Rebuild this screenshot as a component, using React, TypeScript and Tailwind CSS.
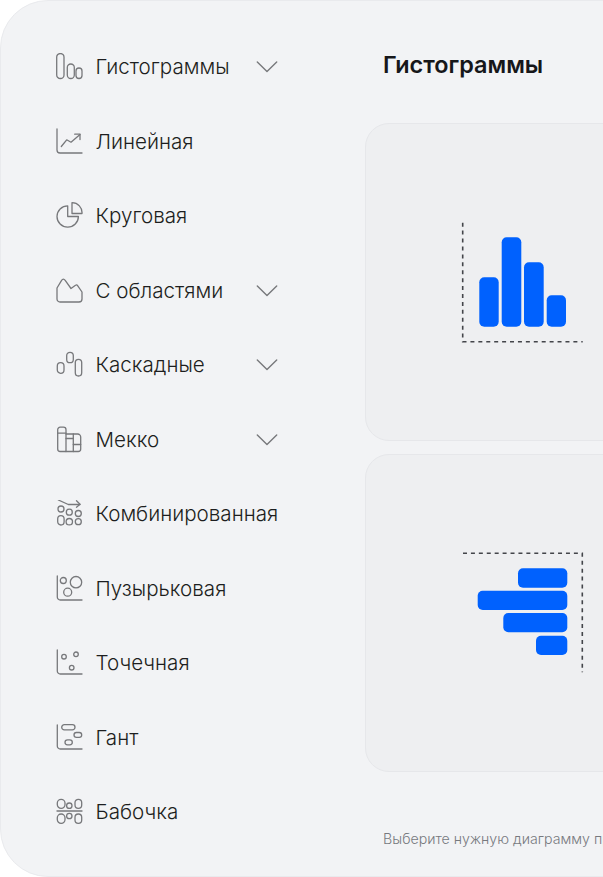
const font = "[font-family:Inter,'Noto_Sans',sans-serif]";

const stroke = {
  fill: "none",
  stroke: "#77787b",
  strokeWidth: 1.3,
  strokeLinecap: "round" as const,
  strokeLinejoin: "round" as const,
};

function Icon({ children }: { children: React.ReactNode }) {
  return (
    <svg width="28" height="28" viewBox="0 0 28 28" className="shrink-0" {...stroke}>
      {children}
    </svg>
  );
}

const Axis = () => <path d="M2.3 1V22a3 3 0 0 0 3 3H27" />;

const items = [
  {
    label: "Гистограммы",
    open: true,
    icon: (
      <>
        <rect x="1.7" y="0.5" width="7.3" height="25" rx="3.6" />
        <rect x="12.3" y="11" width="7" height="14.5" rx="3.5" />
        <rect x="21" y="15" width="6" height="10.5" rx="3" />
      </>
    ),
  },
  {
    label: "Линейная",
    icon: (
      <>
        <path d="M2 1V22a3 3 0 0 0 3 3H27" />
        <path d="M6.3 18.5L11.7 11.8L16 14.2L25 6.5" />
        <path d="M19.7 6.2H25V11.5" />
      </>
    ),
  },
  {
    label: "Круговая",
    icon: (
      <>
        <path d="M12.7 3.8A10.7 10.7 0 1 0 23.4 14.5H12.7Z" />
        <path d="M17 0.7A10 10 0 0 1 27 11.5H17Z" />
      </>
    ),
  },
  {
    label: "С областями",
    open: true,
    icon: <path d="M2 11L6.6 3.4Q8.3 0.8 10.2 3.4L16 11.5L20.5 8.3Q21.7 7.4 22.6 8.6L27 15V22a3 3 0 0 1-3 3H5a3 3 0 0 1-3-3Z" />,
  },
  {
    label: "Каскадные",
    open: true,
    icon: (
      <>
        <rect x="2.3" y="11.7" width="6.7" height="10.6" rx="3.3" />
        <rect x="11.7" y="1.3" width="6.6" height="10.4" rx="3.3" />
        <rect x="20.3" y="8.3" width="6.4" height="16.7" rx="3.2" />
      </>
    ),
  },
  {
    label: "Мекко",
    open: true,
    icon: (
      <>
        <path d="M2.7 3.7a2.5 2.5 0 0 1 2.5-2.5h3.3a2.5 2.5 0 0 1 2.5 2.5V25.5H5.2a2.5 2.5 0 0 1-2.5-2.5Z" />
        <path d="M2.7 7.2H11" />
        <path d="M11 8H22.7a3 3 0 0 1 3 3V23a2.5 2.5 0 0 1-2.5 2.5H11" />
        <path d="M18.3 8V25.5" />
        <path d="M11 12.5H18.3" />
        <path d="M18.3 18.5H25.7" />
      </>
    ),
  },
  {
    label: "Комбинированная",
    icon: (
      <>
        <path d="M3.3 0L13.3 4.5H25" />
        <path d="M21.5 0.8L25 4.3L21.5 7.2" />
        <circle cx="6" cy="9" r="3" />
        <rect x="2.7" y="15.7" width="6.4" height="9.3" rx="3.2" />
        <circle cx="14.3" cy="12.2" r="3" />
        <circle cx="14.3" cy="21.7" r="3.2" />
        <circle cx="23.3" cy="13.5" r="3" />
        <circle cx="23.3" cy="21.7" r="3" />
      </>
    ),
  },
  {
    label: "Пузырьковая",
    icon: (
      <>
        <Axis />
        <circle cx="8.3" cy="5.5" r="3" />
        <circle cx="21" cy="7.2" r="5.7" />
        <circle cx="12.7" cy="17.2" r="4" />
      </>
    ),
  },
  {
    label: "Точечная",
    icon: (
      <>
        <Axis />
        <circle cx="9" cy="7.7" r="2.3" />
        <circle cx="21" cy="5.3" r="2.3" />
        <circle cx="16.7" cy="18.7" r="2.3" />
      </>
    ),
  },
  {
    label: "Гант",
    icon: (
      <>
        <Axis />
        <rect x="6.7" y="0.7" width="13.3" height="5.2" rx="2.6" />
        <rect x="19" y="8.5" width="7.7" height="4.8" rx="2.4" />
        <rect x="10" y="15.8" width="7.3" height="5" rx="2.5" />
      </>
    ),
  },
  {
    label: "Бабочка",
    icon: (
      <>
        <path d="M2 13H27" />
        <rect x="2.3" y="1.3" width="7.7" height="9" rx="3.8" />
        <circle cx="14.3" cy="7.7" r="2.7" />
        <rect x="20" y="1.3" width="6.7" height="9" rx="3.3" />
        <rect x="2.3" y="16" width="7.7" height="9.3" rx="3.8" />
        <circle cx="14.3" cy="18" r="2.7" />
        <rect x="20" y="16" width="6.7" height="9.3" rx="3.3" />
      </>
    ),
  },
];

function Chevron() {
  return (
    <svg width="22" height="12" viewBox="0 0 22 12" fill="none" stroke="#77787b" strokeWidth="1.4" strokeLinecap="round" strokeLinejoin="round" className="shrink-0">
      <path d="M1.3 1L11 10.5L20.7 1" />
    </svg>
  );
}

function VerticalChart() {
  return (
    <svg width="124" height="124" viewBox="0 0 124 124" fill="#0061fe">
      <path d="M1.7 2.7V121.7H121.7" fill="none" stroke="#43454a" strokeWidth="1.6" strokeDasharray="4 3.92" />
      <rect x="18.3" y="57.3" width="19.4" height="49.4" rx="5" />
      <rect x="40.7" y="17.3" width="19.6" height="89.4" rx="5" />
      <rect x="63" y="42.3" width="19.7" height="64.4" rx="5" />
      <rect x="85.7" y="75.3" width="19.3" height="31.4" rx="5" />
    </svg>
  );
}

function HorizontalChart() {
  return (
    <svg width="124" height="124" viewBox="0 0 124 124" fill="#0061fe">
      <path d="M2 2.3H121.3V121.3" fill="none" stroke="#43454a" strokeWidth="1.6" strokeDasharray="4 3.92" />
      <rect x="57" y="17.3" width="49.3" height="19.4" rx="5" />
      <rect x="16.7" y="39.7" width="89.6" height="19.3" rx="5" />
      <rect x="42.3" y="62" width="64" height="19.3" rx="5" />
      <rect x="75" y="84.7" width="31.3" height="19.3" rx="5" />
    </svg>
  );
}

export default function App() {
  return (
    <div className={`h-[877px] w-[603px] overflow-hidden bg-white ${font}`}>
      <div className="flex h-full w-[900px] rounded-[48px] border border-[#e9eaed] bg-[#f2f3f5]">
        <nav className="w-[364px] shrink-0 pl-[54px] pt-[29px]">
          {items.map((item) => (
            <div key={item.label} className="flex h-[74.5px] items-center">
              <Icon>{item.icon}</Icon>
              <span className="ml-[12.5px] w-[160px] whitespace-nowrap text-[20.6px] font-light leading-[30px] text-[#1d1e20]">{item.label}</span>
              {item.open && <Chevron />}
            </div>
          ))}
        </nav>
        <main className="w-[330px] shrink-0">
          <h1 className="ml-[18px] mt-[50px] text-[23.4px] font-semibold leading-[28px] text-[#16171a]">Гистограммы</h1>
          <div className="mt-[44px] flex flex-col gap-[13px]">
            <div className="flex h-[318px] w-[316px] items-center justify-center rounded-[24px] border border-[#e6e7ea] bg-[#eeeff1]">
              <VerticalChart />
            </div>
            <div className="flex h-[318px] w-[316px] items-center justify-center rounded-[24px] border border-[#e6e7ea] bg-[#eeeff1]">
              <HorizontalChart />
            </div>
          </div>
          <p className="ml-[18px] mt-[57px] whitespace-nowrap text-[14.2px] font-light leading-[20px] text-[#77797e]">Выберите нужную диаграмму правой кнопкой мыши</p>
        </main>
      </div>
    </div>
  );
}
